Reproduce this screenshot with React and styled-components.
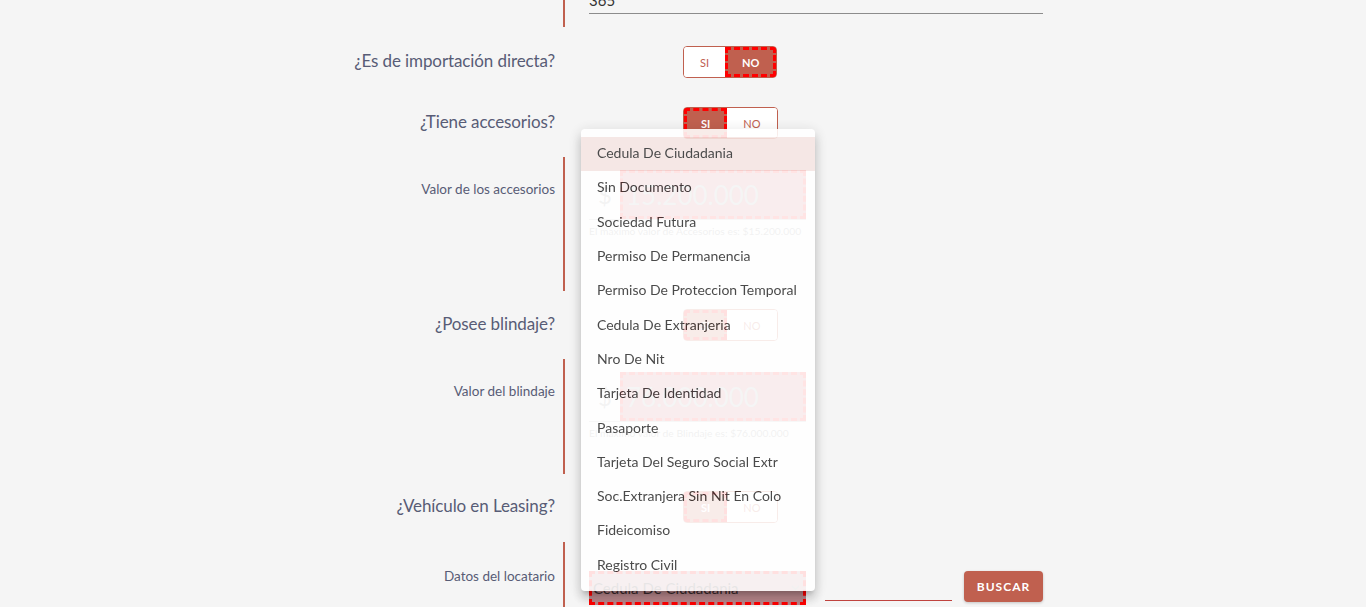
import React, { useLayoutEffect, useRef } from "react";
import styled, { createGlobalStyle } from "styled-components";

const PRIMARY = "#c0604f";
const LABEL = "#585c76";

const GlobalStyle = createGlobalStyle`
  html, body {
    margin: 0;
    height: 100%;
    overflow: hidden;
    background: #f5f5f5;
    font-family: Lato, "Open Sans", sans-serif;
  }
  * { box-sizing: border-box; }
`;

const documentTypes = [
  "Cedula De Ciudadania",
  "Sin Documento",
  "Sociedad Futura",
  "Permiso De Permanencia",
  "Permiso De Proteccion Temporal",
  "Cedula De Extranjeria",
  "Nro De Nit",
  "Tarjeta De Identidad",
  "Pasaporte",
  "Tarjeta Del Seguro Social Extr",
  "Soc.Extranjera Sin Nit En Colo",
  "Fideicomiso",
  "Registro Civil"
];

function Toggle({ value }) {
  return (
    <ToggleGroup>
      <ToggleButton $active={value === "SI"}>SI</ToggleButton>
      <ToggleButton $active={value === "NO"}>NO</ToggleButton>
    </ToggleGroup>
  );
}

function Question({ label, value, mt }) {
  return (
    <QuestionRow $mt={mt}>
      <QuestionLabel>{label}</QuestionLabel>
      <ToggleCell>
        <Toggle value={value} />
      </ToggleCell>
    </QuestionRow>
  );
}

function AmountField({ label, value, helper, height }) {
  return (
    <FieldRow $h={height}>
      <FieldLabel $pt={23}>{label}</FieldLabel>
      <FieldBody $pt={13}>
        <AmountInput>
          <Currency>$</Currency>
          <AmountBox>{value}</AmountBox>
        </AmountInput>
        <Helper>{helper}</Helper>
      </FieldBody>
    </FieldRow>
  );
}

export default function App() {
  const scroller = useRef(null);
  const anchor = useRef(null);

  useLayoutEffect(() => {
    const el = scroller.current;
    const box = anchor.current.getBoundingClientRect();
    el.scrollTop = box.bottom + el.scrollTop - 27;
  }, []);

  return (
    <>
      <GlobalStyle />
      <Viewport ref={scroller}>
        <Page>
          <Form>
            <Title>Datos del vehículo</Title>
            <FieldRow $h={70}>
              <FieldLabel $pt={10}>Placa</FieldLabel>
              <FieldBody $pt={20}>
                <TextValue>ABC123</TextValue>
              </FieldBody>
            </FieldRow>
            <FieldRow $h={70} $mt={18}>
              <FieldLabel $pt={10}>Modelo</FieldLabel>
              <FieldBody $pt={20}>
                <TextValue>2021</TextValue>
              </FieldBody>
            </FieldRow>
            <Question label="¿Es cero kilómetros?" value="NO" mt={18} />
            <FieldRow $h={70} $mt={18} ref={anchor}>
              <FieldLabel $pt={8}>Días de uso</FieldLabel>
              <FieldBody $pt={20}>
                <TextValue>365</TextValue>
              </FieldBody>
            </FieldRow>

            <Question label="¿Es de importación directa?" value="NO" mt={19} />
            <Question label="¿Tiene accesorios?" value="SI" mt={29} />
            <AmountField
              label="Valor de los accesorios"
              value="15.200.000"
              helper="El maximo valor de Accesorios es: $15.200.000"
              height={134}
            />
            <Question label="¿Posee blindaje?" value="SI" mt={18} />
            <AmountField
              label="Valor del blindaje"
              value="76.000.000"
              helper="El maximo valor de Blindaje es: $76.000.000"
              height={115}
            />
            <Question label="¿Vehículo en Leasing?" value="SI" mt={17} />

            <FieldRow $h={110} $mt={19}>
              <FieldLabel $pt={25}>Datos del locatario</FieldLabel>
              <FieldBody $pt={29}>
                <LesseeRow>
                  <SelectBox>
                    <span>Cedula De Ciudadania</span>
                    <svg width="9" height="6" viewBox="0 0 9 6">
                      <path d="M1 1l3.5 3.5L8 1" fill="none" stroke="#8a8a8a" strokeWidth="1.3" />
                    </svg>
                  </SelectBox>
                  <DocInput />
                  <SearchButton>BUSCAR</SearchButton>
                </LesseeRow>
              </FieldBody>
            </FieldRow>
          </Form>
        </Page>
      </Viewport>

      <Menu>
        {documentTypes.map((d, i) => (
          <MenuItem key={d} $selected={i === 0}>
            {d}
          </MenuItem>
        ))}
      </Menu>
    </>
  );
}

const Viewport = styled.div`
  height: 100vh;
  overflow-y: scroll;

  &::-webkit-scrollbar {
    width: 15px;
  }
  &::-webkit-scrollbar-track {
    background: #f1f1f1;
  }
  &::-webkit-scrollbar-thumb {
    background: #c1c1c1;
    border-left: 2px solid #f1f1f1;
    border-right: 2px solid #f1f1f1;
  }
  &::-webkit-scrollbar-button:single-button {
    display: block;
    height: 15px;
    background: #f1f1f1;
  }
`;

const Page = styled.div`
  min-height: 1676px;
  padding-top: 111px;
`;

const Form = styled.div`
  width: 728px;
  margin-left: 315px;
  display: flex;
  flex-direction: column;
`;

const Title = styled.h2`
  margin: 0 0 24px 248px;
  height: 40px;
  font-size: 24px;
  font-weight: 400;
  color: ${LABEL};
`;

const QuestionRow = styled.div`
  display: grid;
  grid-template-columns: 240px 1fr;
  column-gap: 8px;
  align-items: center;
  height: 32px;
  margin-top: ${p => p.$mt || 0}px;
`;

const QuestionLabel = styled.div`
  text-align: right;
  font-size: 17px;
  line-height: 20px;
  padding-bottom: 3px;
  color: ${LABEL};
  letter-spacing: -0.1px;
`;

const ToggleCell = styled.div`
  padding-left: 120px;
  display: flex;
`;

const ToggleGroup = styled.div`
  display: inline-flex;
  height: 32px;
  border: 1px solid ${PRIMARY};
  border-radius: 4px;
  overflow: hidden;
  background: #fff;
`;

const ToggleButton = styled.div`
  display: flex;
  align-items: center;
  justify-content: center;
  padding: 0 ${p => (p.$active ? 17 : 16)}px;
  font-size: 11px;
  font-weight: ${p => (p.$active ? 700 : 400)};
  color: ${p => (p.$active ? "#fff" : PRIMARY)};
  background: ${p => (p.$active ? PRIMARY : "#fff")};
  outline: ${p => (p.$active ? "3px dashed #ff0000" : "none")};
  outline-offset: -3px;
`;

const FieldRow = styled.div`
  display: grid;
  grid-template-columns: 240px 1fr;
  column-gap: 8px;
  height: ${p => p.$h}px;
  margin-top: ${p => p.$mt || 18}px;
`;

const FieldLabel = styled.div`
  text-align: right;
  font-size: 13.5px;
  line-height: 18px;
  color: ${LABEL};
  padding-top: ${p => p.$pt}px;
`;

const FieldBody = styled.div`
  border-left: 2px solid ${PRIMARY};
  padding-left: 24px;
  padding-top: ${p => p.$pt}px;
`;

const TextValue = styled.div`
  height: 37px;
  border-bottom: 1px solid #8c8c8c;
  font-size: 15px;
  color: #333;
  padding-top: 14px;
`;

const AmountInput = styled.div`
  width: 217px;
  display: flex;
  align-items: center;
  border-bottom: 1px solid #bdbdbd;
`;

const Currency = styled.span`
  width: 31px;
  padding-left: 9px;
  font-size: 24px;
  color: #9a9a9a;
`;

const AmountBox = styled.div`
  flex: 1;
  height: 49px;
  display: flex;
  align-items: center;
  padding-left: 6px;
  font-size: 26px;
  color: #a8a8a8;
  background: #c96a72;
  outline: 3px dashed #ff2020;
  outline-offset: -3px;
`;

const Helper = styled.div`
  margin-top: 5px;
  font-size: 10.3px;
  color: #8a8a8a;
`;

const LesseeRow = styled.div`
  display: flex;
  align-items: flex-start;
`;

const SelectBox = styled.div`
  width: 217px;
  height: 34px;
  display: flex;
  align-items: center;
  justify-content: space-between;
  padding: 0 6px 0 4px;
  font-size: 15px;
  color: #3a2a2c;
  background: #b9878c;
  outline: 3px dashed #ff0000;
  outline-offset: -3px;
`;

const DocInput = styled.div`
  width: 127px;
  height: 30px;
  margin-left: 19px;
  border-bottom: 1px solid #c0433f;
`;

const SearchButton = styled.button`
  margin-left: 12px;
  width: 79px;
  height: 31px;
  border: none;
  border-radius: 4px;
  background: ${PRIMARY};
  color: #fff;
  font-family: Lato, sans-serif;
  font-size: 12px;
  font-weight: 700;
  letter-spacing: 1px;
  box-shadow: 0 1px 3px rgba(0, 0, 0, 0.2);
`;

const Menu = styled.ul`
  position: fixed;
  left: 581px;
  top: 129px;
  width: 234px;
  margin: 0;
  padding: 8px 0;
  list-style: none;
  background: #fff;
  border-radius: 4px;
  opacity: 0.88;
  box-shadow: 0 5px 5px -3px rgba(0, 0, 0, 0.2), 0 8px 10px 1px rgba(0, 0, 0, 0.14),
    0 3px 14px 2px rgba(0, 0, 0, 0.12);
`;

const MenuItem = styled.li`
  height: 34.3px;
  display: flex;
  align-items: center;
  padding: 0 16px 3px;
  font-size: 14px;
  color: #333;
  white-space: nowrap;
  background: ${p => (p.$selected ? "rgba(192, 96, 79, 0.16)" : "transparent")};
`;
